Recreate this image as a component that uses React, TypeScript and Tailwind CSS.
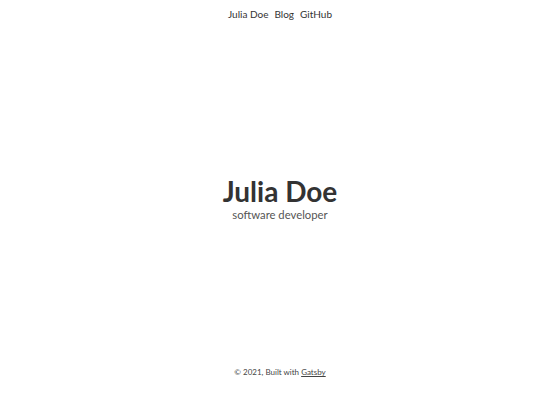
export default function App() {
  return (
    <div
      className="flex min-h-[420px] flex-col bg-white text-[#333]"
      style={{ fontFamily: "Lato, 'Noto Sans', sans-serif" }}
    >
      <nav className="flex justify-center gap-[6px] pt-[7px] text-[10px] leading-[14px]">
        <a href="#">Julia Doe</a>
        <a href="#">Blog</a>
        <a href="#">GitHub</a>
      </nav>
      <main className="flex flex-1 flex-col items-center justify-center pt-[9px]">
        <h1 className="text-[28px] font-bold leading-[34px]">Julia Doe</h1>
        <p className="text-[11.3px] leading-[14px] text-[#555]">software developer</p>
      </main>
      <footer className="pb-[42px] text-center text-[8px] leading-[12px] text-[#444]">
        © 2021, Built with <a href="#" className="underline">Gatsby</a>
      </footer>
    </div>
  );
}
